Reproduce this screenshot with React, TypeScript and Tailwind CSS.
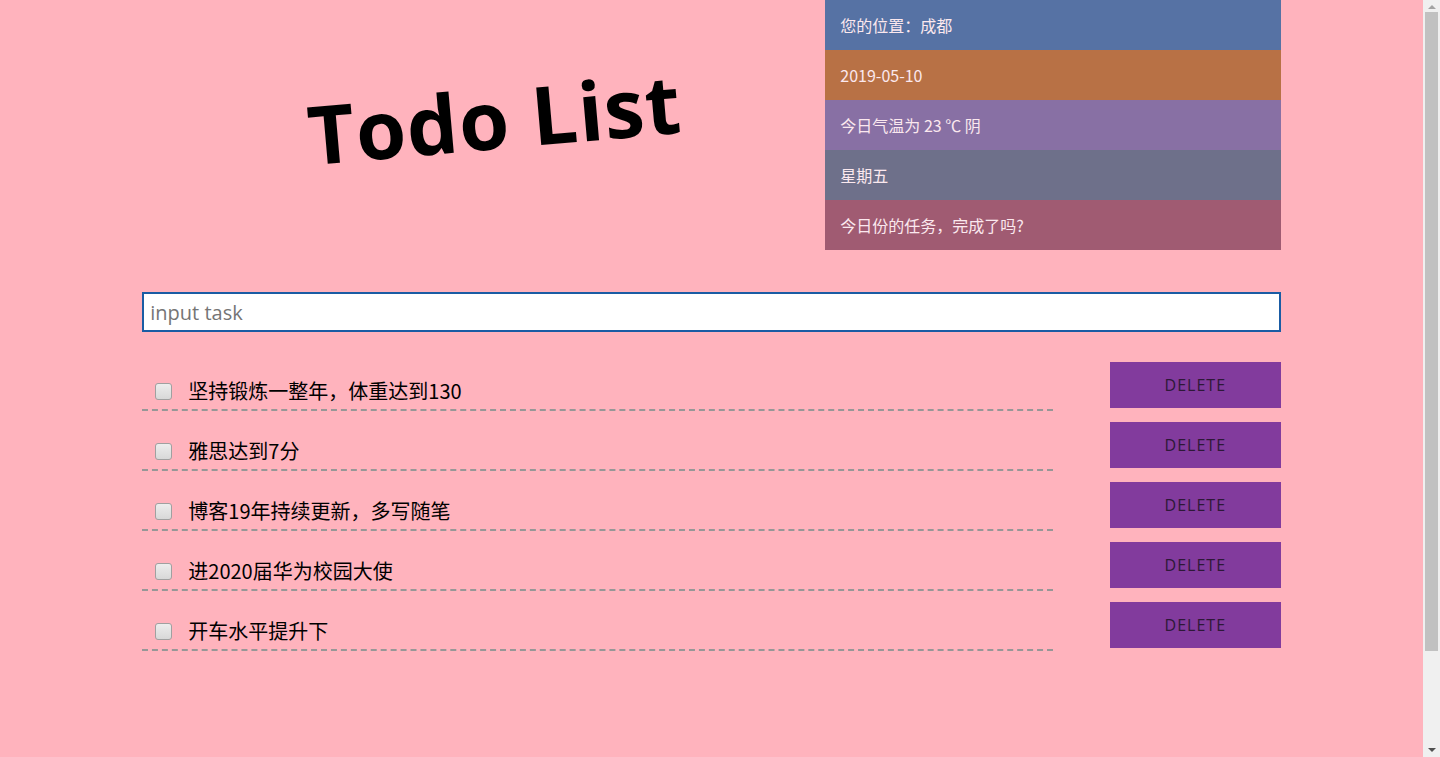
import React from "react";

const info = [
  { text: "您的位置：成都", bg: "bg-[#5672a4]" },
  { text: "2019-05-10", bg: "bg-[#b87145]" },
  { text: "今日气温为 23 ℃ 阴", bg: "bg-[#8870a4]" },
  { text: "星期五", bg: "bg-[#6e708a]" },
  { text: "今日份的任务，完成了吗?", bg: "bg-[#a05b72]" },
];

const tasks = [
  "坚持锻炼一整年，体重达到130",
  "雅思达到7分",
  "博客19年持续更新，多写随笔",
  "进2020届华为校园大使",
  "开车水平提升下",
];

export default function App() {
  return (
    <div className="flex h-[757px] w-full overflow-hidden">
      <main
        className="h-full w-[1423px] shrink-0 bg-[#ffb3bd]"
        style={{ fontFamily: '"Open Sans", "Noto Sans CJK SC", sans-serif' }}
      >
        <div className="mx-auto w-[80%]">
          <header className="flex h-[250px]">
            <div className="flex w-[60%] items-center justify-center pb-[14px]">
              <h1 className="-rotate-[5deg] pl-[20px] text-[81px] font-bold leading-none tracking-[1px] text-black">
                Todo List
              </h1>
            </div>
            <ul className="w-[40%]">
              {info.map((i) => (
                <li
                  key={i.text}
                  className={`flex h-[50px] items-center pl-[15px] text-[16px] text-[#fbe8ee] ${i.bg}`}
                  style={{ fontFamily: '"Noto Sans CJK SC", sans-serif' }}
                >
                  {i.text}
                </li>
              ))}
            </ul>
          </header>

          <div className="mt-[42px]">
            <input
              placeholder="input task"
              className="h-[40px] w-full border-2 border-[#1a5ca4] bg-white px-[6px] text-[20px] text-black outline-none placeholder:text-[#757575]"
            />
          </div>

          <ul className="mt-[30px] flex flex-col gap-[11px]">
            {tasks.map((t) => (
              <li key={t} className="flex items-start">
                <div className="flex h-[49px] w-[80%] items-end border-b-2 border-dashed border-[#979797] pb-[4px]">
                  <div className="flex h-[28px] items-center">
                    <span className="ml-[13px] h-[17px] w-[17px] rounded-[3px] border border-[#a0a0a0] bg-gradient-to-b from-[#ededed] to-[#d8d8d8]" />
                    <span
                      className="ml-[16px] text-[20px] text-black"
                      style={{ fontFamily: '"Noto Sans CJK SC", sans-serif' }}
                    >
                      {t}
                    </span>
                  </div>
                </div>
                <button className="ml-auto h-[46px] w-[15%] bg-[#823b9d] text-[16px] tracking-[1px] text-[#2e1838]">
                  DELETE
                </button>
              </li>
            ))}
          </ul>
        </div>
      </main>
      <aside className="flex h-full w-[17px] flex-col items-center bg-[#f0f0f0]">
        <span className="mt-[5px] h-0 w-0 border-x-[4px] border-b-[4px] border-x-transparent border-b-[#a3a3a3]" />
        <span className="mt-[3px] h-[639px] w-[13px] bg-[#c1c1c1]" />
        <span className="mt-auto mb-[5px] h-0 w-0 border-x-[4px] border-t-[4px] border-x-transparent border-t-[#505050]" />
      </aside>
    </div>
  );
}
